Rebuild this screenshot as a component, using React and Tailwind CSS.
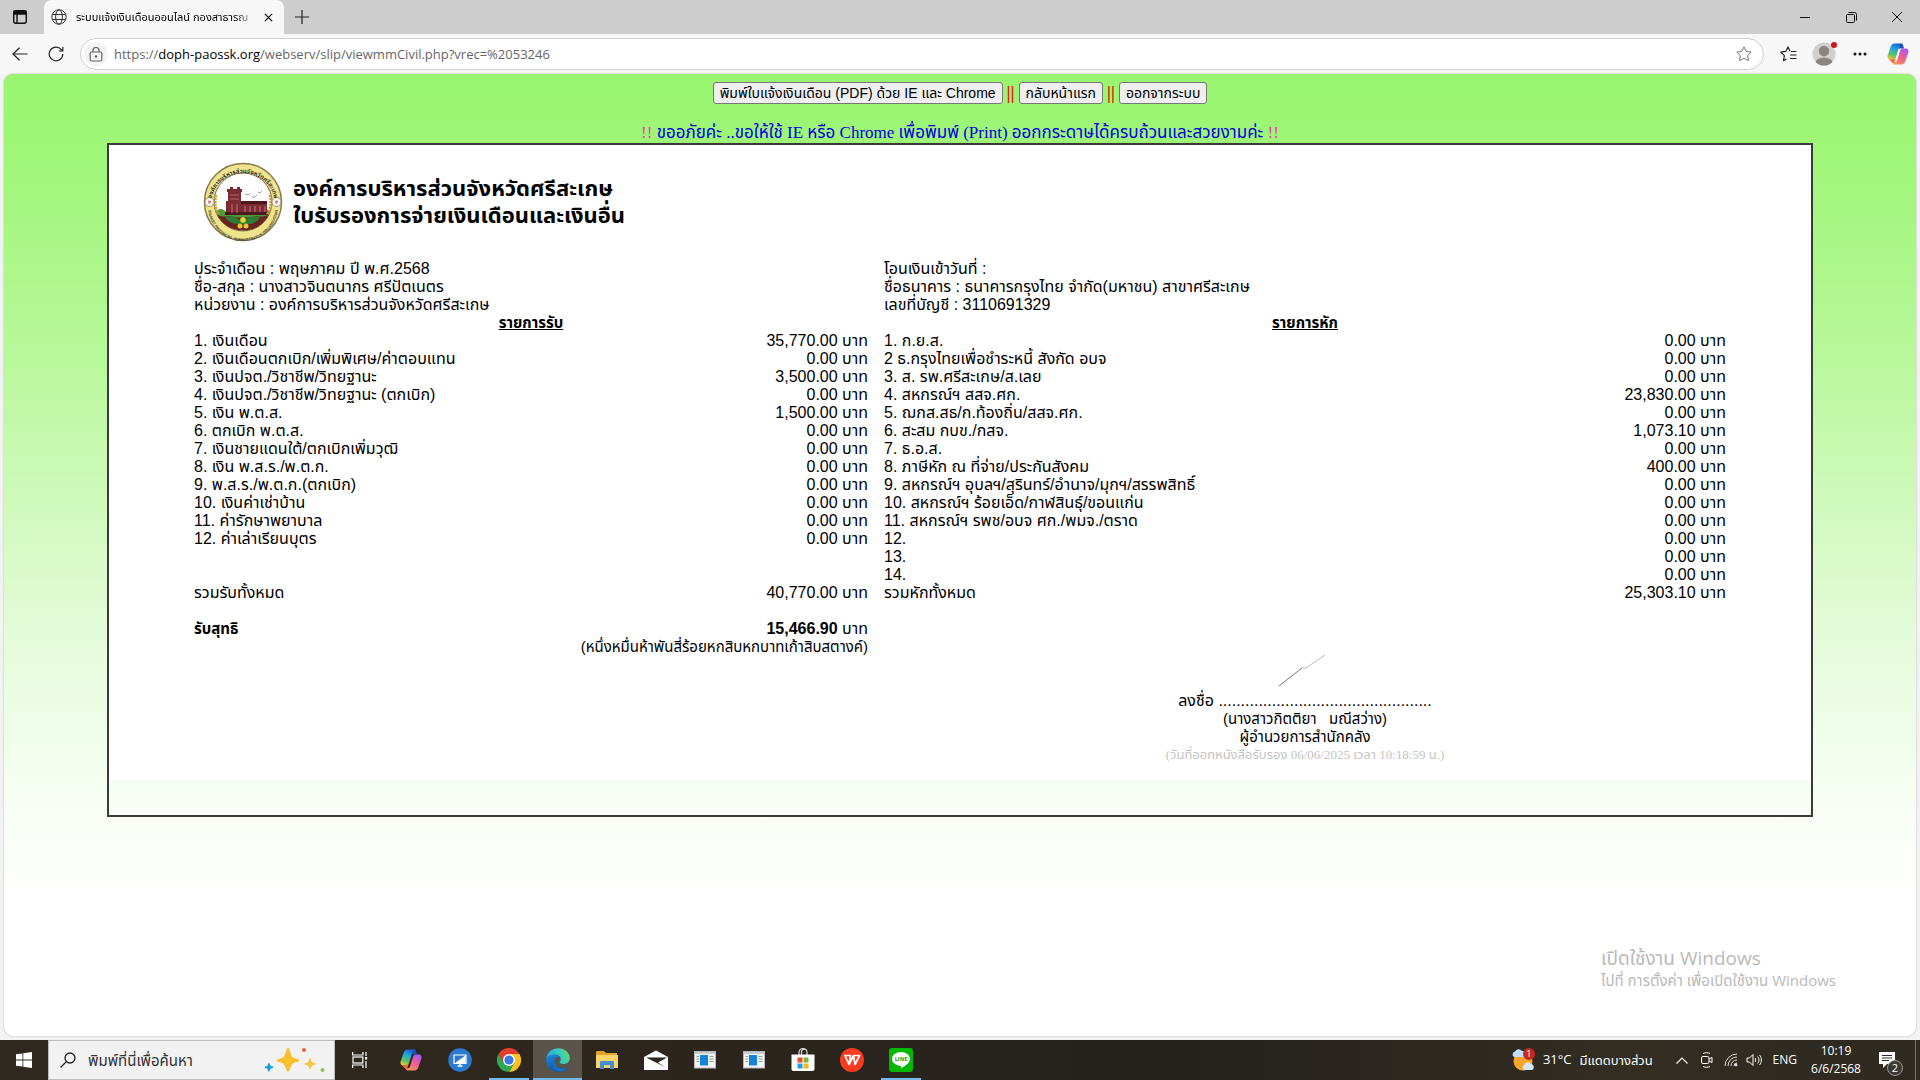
import React from "react";

const SANS = "font-['Liberation_Sans','Noto_Sans_Thai','Loma',sans-serif]";
const SERIF = "font-['Liberation_Serif','Noto_Sans_Thai','Loma',sans-serif]";
const UI = "font-['Open_Sans','Noto_Sans_Thai','Loma',sans-serif]";

const income = [
  ["1. เงินเดือน", "35,770.00"],
  ["2. เงินเดือนตกเบิก/เพิ่มพิเศษ/ค่าตอบแทน", "0.00"],
  ["3. เงินปจต./วิชาชีพ/วิทยฐานะ", "3,500.00"],
  ["4. เงินปจต./วิชาชีพ/วิทยฐานะ (ตกเบิก)", "0.00"],
  ["5. เงิน พ.ต.ส.", "1,500.00"],
  ["6. ตกเบิก พ.ต.ส.", "0.00"],
  ["7. เงินชายแดนใต้/ตกเบิกเพิ่มวุฒิ", "0.00"],
  ["8. เงิน พ.ส.ร./พ.ต.ก.", "0.00"],
  ["9. พ.ส.ร./พ.ต.ก.(ตกเบิก)", "0.00"],
  ["10. เงินค่าเช่าบ้าน", "0.00"],
  ["11. ค่ารักษาพยาบาล", "0.00"],
  ["12. ค่าเล่าเรียนบุตร", "0.00"],
  null,
  null,
  ["รวมรับทั้งหมด", "40,770.00"],
];

const deductions = [
  ["1. ก.ย.ส.", "0.00"],
  ["2 ธ.กรุงไทยเพื่อชำระหนี้ สังกัด อบจ", "0.00"],
  ["3. ส. รพ.ศรีสะเกษ/ส.เลย", "0.00"],
  ["4. สหกรณ์ฯ สสจ.ศก.", "23,830.00"],
  ["5. ฌกส.สธ/ก.ท้องถิ่น/สสจ.ศก.", "0.00"],
  ["6. สะสม กบข./กสจ.", "1,073.10"],
  ["7. ธ.อ.ส.", "0.00"],
  ["8. ภาษีหัก ณ ที่จ่าย/ประกันสังคม", "400.00"],
  ["9. สหกรณ์ฯ อุบลฯ/สุรินทร์/อำนาจ/มุกฯ/สรรพสิทธิ์", "0.00"],
  ["10. สหกรณ์ฯ ร้อยเอ็ด/กาฬสินธุ์/ขอนแก่น", "0.00"],
  ["11. สหกรณ์ฯ รพช/อบจ ศก./พมจ./ตราด", "0.00"],
  ["12.", "0.00"],
  ["13.", "0.00"],
  ["14.", "0.00"],
  ["รวมหักทั้งหมด", "25,303.10"],
];

function Copilot({ id, className }) {
  return (
    <svg viewBox="0 0 24 24" className={className} aria-hidden="true">
      <defs>
        <linearGradient id={id + "a"} x1="0.6" y1="0" x2="0.2" y2="1">
          <stop offset="0" stopColor="#1b5fd6" />
          <stop offset="0.35" stopColor="#1fa7e0" />
          <stop offset="0.7" stopColor="#5cc26b" />
          <stop offset="1" stopColor="#f3c92a" />
        </linearGradient>
        <linearGradient id={id + "b"} x1="0.7" y1="0" x2="0.2" y2="1">
          <stop offset="0" stopColor="#a55bf0" />
          <stop offset="0.45" stopColor="#ec5c98" />
          <stop offset="1" stopColor="#fb9350" />
        </linearGradient>
      </defs>
      <path d="M15 1.5H8.5c-2 0-3.200 1.500-3.900 3.500L1.800 13c-1 3 .4 4.500 2.700 4.500h2.200c2 0 2.900-1.100 3.500-3l2.600-8.500c.5-1.600 1.200-2.200 2.700-2.200h1.700C16.700 2.300 16.200 1.500 15 1.500z" fill={"url(#" + id + "a)"} />
      <path d="M14.500 1.500c1.500 0 2.200.8 2.700 2.300l.8 2.700h-3.500c-1 0-1.600.4-2 1.500l.8-3c.4-2 .2-3.500 1.200-3.500z" fill="#1f4fb8" />
      <path d="M9 22.500h6.500c2 0 3.200-1.500 3.900-3.500l2.800-8c1-3-.4-4.500-2.700-4.500h-2.200c-2 0-2.900 1.100-3.500 3L11.200 18c-.5 1.600-1.200 2.200-2.700 2.200H6.800c.5 1.500 1 2.300 2.200 2.300z" fill={"url(#" + id + "b)"} />
      <path d="M2.800 17.300h3.900c1.500 0 2.400-.5 3-1.600l-1 3.300c-.4 1.500-1.300 3-2.500 1.500z" fill="#f26a3b" />
    </svg>
  );
}

function WinButton({ label, children }) {
  return (
    <button aria-label={label} className="flex h-[34px] w-[46px] items-center justify-center">
      {children}
    </button>
  );
}

function TabStrip() {
  return (
    <div className="flex h-[34px] items-stretch bg-[#cdcdcd]">
      <button aria-label="Tab actions" className="flex w-11 items-center pl-3">
        <svg viewBox="0 0 16 16" className="size-4" fill="none" stroke="#111" strokeWidth="1.4">
          <rect x="1.700" y="1.700" width="12.600" height="12.600" rx="2.200" />
          <path d="M1.700 3.700c0-1.200.8-2 2-2h8.600c1.200 0 2 .8 2 2V5H1.700z" fill="#111" />
          <path d="M5 5v9" />
        </svg>
      </button>
      <div className="flex w-60 items-center rounded-t-lg bg-[#f7f7f7] pl-[7px]">
        <svg viewBox="0 0 16 16" className="size-4 shrink-0" fill="none" stroke="#333" strokeWidth="1">
          <circle cx="8" cy="8" r="7.200" />
          <ellipse cx="8" cy="8" rx="3.400" ry="7.200" />
          <path d="M1.500 5.500h13M1.500 10.500h13" />
        </svg>
        <span className="ml-[9px] w-[180px] text-[11px] leading-6 whitespace-nowrap text-black [mask-image:linear-gradient(to_right,black_88%,transparent)]">
          ระบบแจ้งเงินเดือนออนไลน์ กองสาธารณ
        </span>
        <button aria-label="Close tab" className="ml-1 flex size-4 items-center justify-center">
          <svg viewBox="0 0 10 10" className="size-[9px]" stroke="#111" strokeWidth="1.400"><path d="M1 1l8 8M9 1l-8 8" /></svg>
        </button>
      </div>
      <button aria-label="New tab" className="flex w-9 items-center justify-center">
        <svg viewBox="0 0 14 14" className="size-3.5" stroke="#222" strokeWidth="1.200"><path d="M7 0v14M0 7h14" /></svg>
      </button>
      <div className="ml-auto flex">
        <WinButton label="Minimize">
          <svg viewBox="0 0 10 10" className="size-2.5" stroke="#111"><path d="M0 5.500h10" /></svg>
        </WinButton>
        <WinButton label="Restore">
          <svg viewBox="0 0 11 11" className="size-[11px]" fill="none" stroke="#111"><rect x=".5" y="2.500" width="8" height="8" rx="1" /><path d="M2.500.5h6a2 2 0 0 1 2 2v6" /></svg>
        </WinButton>
        <WinButton label="Close">
          <svg viewBox="0 0 10 10" className="size-2.5" stroke="#111"><path d="M0 0l10 10M10 0L0 10" /></svg>
        </WinButton>
      </div>
    </div>
  );
}

function Toolbar() {
  return (
    <div className="flex h-10 items-center bg-[#f7f7f7]">
      <button aria-label="Back" className="flex w-10 justify-center">
        <svg viewBox="0 0 16 14" className="h-3.5 w-4" fill="none" stroke="#222" strokeWidth="1.200"><path d="M15.500 7H1M7.500.8L1 7l6.500 6.200" /></svg>
      </button>
      <button aria-label="Reload" className="flex w-8 justify-center">
        <svg viewBox="0 0 16 16" className="size-4" fill="none" stroke="#222" strokeWidth="1.200"><path d="M14.800 8a6.800 6.800 0 1 1-1.500-4.300L14.800 5M14.800 1v4h-4" /></svg>
      </button>
      <div className="ml-2 flex h-8 flex-1 items-center rounded-full border border-[#cfcfcf] bg-white pr-[11px] pl-[3px]">
        <span className="flex size-6 items-center justify-center rounded-full bg-[#f3f3f3]">
          <svg viewBox="0 0 14 15" className="h-[15px] w-3.5" fill="none" stroke="#666" strokeWidth="1.200">
            <rect x="1.200" y="5" width="11.600" height="9" rx="1.500" />
            <path d="M4 5V3.500a3 3 0 0 1 6 0V5" />
            <circle cx="7" cy="9.500" r=".7" fill="#666" />
          </svg>
        </span>
        <a href="https://doph-paossk.org/webserv/slip/viewmmCivil.php?vrec=%2053246" className="ml-1.5 flex-1 text-[13px] leading-5 text-[#666]">
          https://<span className="text-black">doph-paossk.org</span>/webserv/slip/viewmmCivil.php?vrec=%2053246
        </a>
        <button aria-label="Add to favorites">
          <svg viewBox="0 0 16 16" className="size-4" fill="none" stroke="#777" strokeLinejoin="round"><path d="M8 .8l2.200 4.600 5 .7-3.600 3.500.9 5L8 12.200l-4.500 2.400.9-5L.8 6.100l5-.7z" /></svg>
        </button>
      </div>
      <button aria-label="Favorites" className="ml-4 flex w-4 justify-center">
        <svg viewBox="0 0 17 16" className="h-4 w-[17px] shrink-0" fill="none" stroke="#222" strokeWidth="1.200" strokeLinejoin="round"><path d="M10 5.300L8 .9 5.800 5.400l-5 .7L4.400 9.600l-.9 5L6.500 13M11 5.500h5.500M10 9h6.500M10 12.500h6.500" /></svg>
      </button>
      <button aria-label="Profile" className="relative ml-4 flex">
        <svg viewBox="0 0 24 24" className="size-6">
          <defs><clipPath id="avatar"><circle cx="12" cy="12" r="11.500" /></clipPath></defs>
          <g clipPath="url(#avatar)"><rect width="24" height="24" fill="#d2d0ce" /><circle cx="12" cy="9" r="5.200" fill="#8a8683" /><ellipse cx="12" cy="21" rx="8.500" ry="5.500" fill="#8a8683" /></g>
        </svg>
        <span className="absolute top-0 -right-px size-1.5 rounded-full bg-[#d8101c]" />
      </button>
      <button aria-label="Settings and more" className="ml-1 flex w-10 justify-center">
        <svg viewBox="0 0 14 4" className="h-1 w-3.5" fill="#111"><circle cx="2" cy="2" r="1.500" /><circle cx="7" cy="2" r="1.500" /><circle cx="12" cy="2" r="1.500" /></svg>
      </button>
      <button aria-label="Copilot" className="mr-2.5 ml-1.5 flex"><Copilot id="ct" className="size-6" /></button>
    </div>
  );
}

function Seal() {
  return (
    <svg viewBox="0 0 80 80" className="size-20 shrink-0" role="img" aria-label="seal">
      <defs>
        <path id="sealTop" d="M8 43a32 32 0 1 1 64 0" />
        <path id="sealBottom" d="M5 44a35 35 0 0 0 70 0" />
      </defs>
      <circle cx="40" cy="40" r="38.500" fill="#f0e48a" stroke="#8a7a50" strokeWidth="1.500" />
      <circle cx="40" cy="40" r="29" fill="#fff" stroke="#7a6a40" />
      <path d="M14 52c7 3 45 3 52 0-4 10-14 16.500-26 16.500S18 62 14 52z" fill="#6b2320" />
      <path d="M13 50c3-5 8-3 11 1h32c3-4 8-6 11-1-2 5-9 5-14 4-9 2-18 2-27 0-5 1-11 1-13-4z" fill="#4f9a3a" />
      <path d="M22 55c6-2 12 0 17 5 5-5 11-7 18-5-3 6-9 8-17 7-9 1-15-2-18-7z" fill="#2f7d32" />
      <path d="M24 27h3v-2h3v2h4v-2h3v2h2v3h-1v9h26v13H23V39h2v-9h-1z" fill="#7e2a33" />
      <path d="M38 39h26v3H38zM22 50h43v3H22z" fill="#4c161d" />
      <path d="M27 33h9M27 37h9M42 44v6M47 44v6M52 44v6M57 44v6M62 44v6M29 42v9M34 42v9" stroke="#b56a6c" strokeWidth="1.200" />
      <path d="M42 32l3 1 2-2M49 35l3 0 2-2M55 30l2 1 2-2" stroke="#8a6f78" strokeWidth=".7" fill="none" />
      <path d="M13 33c-2 8-1 14 3 20M67 33c2 8 1 14-3 20" stroke="#c79b32" strokeWidth="3" strokeDasharray="2 1" fill="none" />
      <circle cx="40" cy="58" r="2.800" fill="#e8d93a" /><circle cx="37" cy="64" r="2.500" fill="#e5c92c" /><circle cx="43" cy="64" r="2.500" fill="#e5c92c" />
      <circle cx="6.500" cy="40" r="4.500" fill="#fff" stroke="#7a6a40" strokeWidth=".7" /><circle cx="73.500" cy="40" r="4.500" fill="#fff" stroke="#7a6a40" strokeWidth=".7" />
      <circle cx="6.500" cy="40" r="1.800" fill="#d98a84" /><circle cx="73.500" cy="40" r="1.800" fill="#d98a84" />
      <text fontSize="6" fontWeight="700" fill="#333"><textPath href="#sealTop" startOffset="50%" textAnchor="middle">องค์การบริหารส่วนจังหวัดศรีสะเกษ</textPath></text>
      <text fontSize="3.700" fontWeight="700" fill="#333"><textPath href="#sealBottom" startOffset="50%" textAnchor="middle">SISAKET PROVINCIAL ADMINISTRATIVE ORGANIZATION</textPath></text>
    </svg>
  );
}

function SlipTable({ info, title, rows, children }) {
  return (
    <div className="min-w-0">
      {info.map((line) => <p key={line} className="whitespace-nowrap">{line}</p>)}
      <table className="w-full border-collapse">
        <thead>
          <tr><th colSpan={2} className="h-[18px] p-0 text-center text-[15px] font-bold underline">{title}</th></tr>
        </thead>
        <tbody>
          {rows.map((row, i) => (
            <tr key={i} className="h-[18px]">
              <td className="p-0 whitespace-nowrap">{row ? row[0] : ""}</td>
              <td className="p-0 text-right whitespace-nowrap">{row ? row[1] + " บาท" : ""}</td>
            </tr>
          ))}
          {children}
        </tbody>
      </table>
    </div>
  );
}

function Slip() {
  return (
    <main className={"mx-[103px] border-2 border-[#3a3a3a] pb-[35px] text-[16px] leading-[18px] text-black " + SANS}>
      <div className="bg-white px-[85px] pt-[17px] pb-4">
        <header className="flex items-center gap-2.5 pl-[9px]">
          <Seal />
          <h1 className="text-[22px] leading-[27px] font-bold">
            องค์การบริหารส่วนจังหวัดศรีสะเกษ<br />ใบรับรองการจ่ายเงินเดือนและเงินอื่น
          </h1>
        </header>
        <div className="mt-[18px] grid grid-cols-[674fr_842fr] gap-4">
          <SlipTable
            title="รายการรับ"
            rows={income}
            info={["ประจำเดือน : พฤษภาคม ปี พ.ศ.2568", "ชื่อ-สกุล : นางสาวจินตนากร ศรีปัตเนตร", "หน่วยงาน : องค์การบริหารส่วนจังหวัดศรีสะเกษ"]}
          >
            <tr className="h-[18px]"><td colSpan={2} /></tr>
            <tr className="h-[18px]">
              <td className="p-0 text-[15px] font-bold">รับสุทธิ</td>
              <td className="p-0 text-right"><b>15,466.90</b> บาท</td>
            </tr>
            <tr className="h-[18px]"><td colSpan={2} className="p-0 text-right text-[15px]">(หนึ่งหมื่นห้าพันสี่ร้อยหกสิบหกบาทเก้าสิบสตางค์)</td></tr>
          </SlipTable>
          <div>
            <SlipTable
              title="รายการหัก"
              rows={deductions}
              info={["โอนเงินเข้าวันที่ :", "ชื่อธนาคาร : ธนาคารกรุงไทย จำกัด(มหาชน) สาขาศรีสะเกษ", "เลขที่บัญชี : 3110691329"]}
            />
            <div className="mt-[51px] text-center">
              <svg viewBox="0 0 48 34" className="ml-[394px] h-[34px] w-12" fill="none"><path d="M1 33l23-18" stroke="#777" /><path d="M24 15l4 0L47 2" stroke="#aaa" strokeWidth=".8" /></svg>
              <p className="mt-[5px]">ลงชื่อ ................................................</p>
              <p className="text-[15px] whitespace-pre">(นางสาวกิตติยา   มณีสว่าง)</p>
              <p className="text-[15px]">ผู้อำนวยการสำนักคลัง</p>
              <p className={"text-[13px] text-[#c4c4c4] " + SERIF}>(วันที่ออกหนังสือรับรอง 06/06/2025 เวลา 10:18:59 น.)</p>
            </div>
          </div>
        </div>
      </div>
    </main>
  );
}

function PageButton({ children }) {
  return <button className={"h-[22px] rounded-[3px] border border-[#767676] bg-[#efefef] px-1.5 text-[14px] leading-5 font-normal whitespace-nowrap text-black " + SANS}>{children}</button>;
}

function WebPage() {
  return (
    <div className="relative mx-1 flex-1 overflow-hidden rounded-[9px] bg-white bg-[linear-gradient(to_bottom,#99f56f_0px,#9ff678_76px,#b3f793_246px,#e2fbd6_546px,#f8fef5_726px,#ffffff_830px)] pt-2 shadow-[0_0_2px_#aaa]">
      <div className={"flex h-[22px] items-center justify-center gap-1 text-[18px] font-bold text-[#ff0000] " + SERIF}>
        <PageButton>พิมพ์ใบแจ้งเงินเดือน (PDF) ด้วย IE และ Chrome</PageButton>
        <span>||</span>
        <PageButton>กลับหน้าแรก</PageButton>
        <span>||</span>
        <PageButton>ออกจากระบบ</PageButton>
      </div>
      <p className={"mt-[18px] h-[21px] text-center text-[17px] leading-[21px] text-[#0000e0] " + SERIF}>
        <span className="text-[#e83fc0]">!!</span> ขออภัยค่ะ ..ขอให้ใช้ IE หรือ Chrome เพื่อพิมพ์ (Print) ออกกระดาษได้ครบถ้วนและสวยงามค่ะ <span className="text-[#e83fc0]">!!</span>
      </p>
      <Slip />
      <div className="absolute right-20 bottom-[46px] text-[#b9b9b9]">
        <p className="text-[19px] leading-6">เปิดใช้งาน Windows</p>
        <p className="text-[15px] leading-5">ไปที่ การตั้งค่า เพื่อเปิดใช้งาน Windows</p>
      </div>
    </div>
  );
}

function TaskButton({ label, children, open, active }) {
  return (
    <button aria-label={label} className={"relative flex h-10 w-[49px] items-center justify-center " + (active ? "bg-[#5a534b]" : "")}>
      {children}
      {(open || active) && <span className={"absolute bottom-0 h-0.5 bg-[#76b9ed] " + (active ? "w-full" : "w-10")} />}
    </button>
  );
}

function AppWindowIcon() {
  return (
    <svg viewBox="0 0 22 18" className="h-[18px] w-[22px]"><rect x=".5" y=".5" width="21" height="16.500" fill="#f4f4f4" stroke="#b8b8b8" /><path d="M1 1h20v2H1z" fill="#c5ccd2" /><rect x="6" y="4" width="8" height="10.500" fill="#1583d8" /><path d="M2.500 5.500h2.500M2.500 8h2.500M2.500 10.500h2.500M15.500 5.500h4M15.500 8h4M15.500 10.500h4" stroke="#999" /></svg>
  );
}

function Taskbar() {
  return (
    <footer className="flex h-10 items-center bg-[linear-gradient(to_right,#2f291f,#2b251d_40%,#24211d_60%,#332d22_85%,#2e2a22)] text-white">
      <button aria-label="Start" className="flex h-10 w-12 items-center justify-center">
        <svg viewBox="0 0 16 16" className="size-4" fill="#fff"><path d="M0 2.300l6.500-.9v6.200H0zM7.300 1.300L16 0v7.600H7.300zM0 8.400h6.500v6.200L0 13.700zM7.300 8.400H16V16l-8.700-1.300z" /></svg>
      </button>
      <label className="flex h-10 w-[287px] items-center border border-[#bdbdbd] bg-[#f2f2f2] pl-[11px]">
        <svg viewBox="0 0 16 16" className="size-4 shrink-0" fill="none" stroke="#222" strokeWidth="1.300"><circle cx="10" cy="6" r="5" /><path d="M6.500 9.500L.5 15.500" /></svg>
        <input aria-label="พิมพ์ที่นี่เพื่อค้นหา" placeholder="พิมพ์ที่นี่เพื่อค้นหา" className="ml-3 w-40 min-w-0 bg-transparent text-[15px] leading-6 outline-none placeholder:text-[#333]" />
        <svg viewBox="0 0 62 26" className="ml-4 h-[26px] w-[62px] shrink-0">
          <path d="M24 1c2 0 2.500 8 5 9.500 2 1.200 6.500 1.500 6.500 3s-4.500 1.500-6.500 3C26.500 18 26 24.500 24 24.500S21.500 18 19 16.500c-2-1.500-6.500-1.500-6.500-3s4.500-1.800 6.500-3C21.500 9 22 1 24 1z" fill="#fbbf2c" />
          <path d="M46 11c1 0 1.200 3.500 2.200 4.300.8.700 3.300.7 3.300 1.700s-2.500.8-3.300 1.700C47.200 19.500 47 22 46 22s-1.200-2.500-2.200-3.300c-.8-.8-3.300-.7-3.300-1.700s2.500-1 3.300-1.700C44.800 14.500 45 11 46 11z" fill="#f9c64a" />
          <path d="M5 16c.8 0 1 2.300 1.700 2.800.7.500 2.800.4 2.800 1.400s-2.100.8-2.800 1.500S5.500 25 4.700 24.700s-.7-2-1.200-2.700-2.800-.9-2.800-1.700 2-1 2.600-1.600S4.200 16 5 16z" fill="#1b9de2" />
          <circle cx="40" cy="3" r="2" fill="#e8632b" /><circle cx="58.500" cy="23" r="2" fill="#8cc34b" />
        </svg>
      </label>
      <TaskButton label="Task view">
        <svg viewBox="0 0 16 16" className="size-4" fill="none" stroke="#fff" strokeWidth="1.200"><path d="M.6 0v3h10.300V0M.6 16v-3h10.300v3" /><rect x="1" y="5" width="9.800" height="6" /><path d="M14 0v4M14 9v7" /><path d="M13 5h2.200v2.500H13z" fill="#fff" stroke="none" /></svg>
      </TaskButton>
      <div className="ml-0.5 flex">
        <TaskButton label="Copilot"><Copilot id="cb" className="size-6" /></TaskButton>
        <TaskButton label="PC Manager">
          <svg viewBox="0 0 24 24" className="size-6"><circle cx="12" cy="12" r="11.800" fill="#2a7bd0" /><path d="M6 7h12v8.500H6z" fill="none" stroke="#fff" strokeWidth="1.200" /><path d="M17.500 7.500v7.500H7z" fill="#fff" /><path d="M9.500 18h5M12 15.500V18" stroke="#fff" strokeWidth="1.500" /></svg>
        </TaskButton>
        <TaskButton label="Chrome" open>
          <svg viewBox="0 0 24 24" className="size-6"><path d="M12 12V6h10.400A12 12 0 0 1 12 24l5.200-9z" fill="#fcc31e" /><path d="M12 12l-5.200 3L1.600 6A12 12 0 0 0 12 24l5.200-9z" fill="#2da94f" /><path d="M12 6h10.400a12 12 0 0 0-20.800 0l5.200 9z" fill="#e33b2e" /><circle cx="12" cy="12" r="6" fill="#fff" /><circle cx="12" cy="12" r="4.600" fill="#3b78e7" /></svg>
        </TaskButton>
        <TaskButton label="Edge" active>
          <svg viewBox="0 0 24 24" className="size-6">
            <defs>
              <linearGradient id="edgeTop" x1="0" y1=".6" x2="1" y2=".3"><stop offset="0" stopColor="#2aa5e2" /><stop offset=".5" stopColor="#2fc7cf" /><stop offset="1" stopColor="#5fdc6c" /></linearGradient>
              <linearGradient id="edgeLow" x1="0" y1="0" x2=".6" y2="1"><stop offset="0" stopColor="#1b8fdc" /><stop offset="1" stopColor="#0c4f9e" /></linearGradient>
            </defs>
            <path d="M.3 11C1 4.500 6 .2 12 .2c6.800 0 11.800 4.800 11.800 9.800 0 3.700-2.800 6-6 6-3 0-4.300-1-4-2 .3-.7 1-1.200 1-2.700 0-2.500-2.300-4.600-5.800-4.600C4.800 6.700 1 8.500.3 11z" fill="url(#edgeTop)" />
            <path d="M.2 12C.2 8.500 4 6.700 8.500 6.700c3 0 5 1.200 5.900 2.700-3.700-1.500-6 1-6 3.600 0 4.500 4 8.500 9.500 7.500 1.500-.3 3-.8 3.700-.7.500.1-2.600 4-9.300 4A12 12 0 0 1 .2 12z" fill="url(#edgeLow)" />
            <path d="M8.400 13c0 4.500 4 8.500 9.500 7.500 1.700-.3 3.200-1 3.700-.7-1.800 2.400-4.600 3.700-7.600 4C9 23 6.500 19.500 6.500 16c0-3.500 2-6.500 4.800-7C9.500 9.800 8.400 11.300 8.400 13z" fill="#176fc4" />
          </svg>
        </TaskButton>
        <TaskButton label="File Explorer">
          <svg viewBox="0 0 22 20" className="h-5 w-[22px]"><path d="M0 2.500C0 1.500.6 1 1.500 1H8l2 2h11v5H0z" fill="#e0a52c" /><path d="M0 5h21c.6 0 1 .4 1 1v12H0z" fill="#fbd56a" /><path d="M4 19v-6.500C4 11.500 4.500 11 5.500 11h11c1 0 1.500.5 1.500 1.500V19h-4v-4H8v4z" fill="#3f8fd1" /></svg>
        </TaskButton>
        <TaskButton label="Mail">
          <svg viewBox="0 0 24 20" className="h-5 w-6"><path d="M0 7L12 .5 24 7v13H0z" fill="#fff" /><path d="M2 7.500h21l-9 5 7 4.500z" fill="#2b251d" /></svg>
        </TaskButton>
        <TaskButton label="App window"><AppWindowIcon /></TaskButton>
        <TaskButton label="App window"><AppWindowIcon /></TaskButton>
        <TaskButton label="Microsoft Store">
          <svg viewBox="0 0 24 24" className="size-6"><path d="M8 7V4.500a4 4 0 0 1 8 0V7M10.500 7V4.500a3 3 0 0 1 5-2.500" fill="none" stroke="#ddd" strokeWidth="1.200" /><path d="M.5 6.500h23V21c0 1.300-.8 2-2 2h-19c-1.200 0-2-.7-2-2z" fill="#fff" /><path d="M6.500 9.500h5v5h-5z" fill="#e8502a" /><path d="M12.500 9.500h5v5h-5z" fill="#7cb82b" /><path d="M6.500 15.500h5v5h-5z" fill="#1ba1e2" /><path d="M12.500 15.500h5v5h-5z" fill="#fbb416" /></svg>
        </TaskButton>
        <TaskButton label="WPS Office">
          <svg viewBox="0 0 24 24" className="size-6"><circle cx="12" cy="12" r="12" fill="#fb3a1e" /><path d="M5 7.500h5.500l-1.500 9L5 7.500zM9 16.500l4.500-9 1.500 9 4.500-9h-6" fill="none" stroke="#fff" strokeWidth="1.700" strokeLinejoin="round" /></svg>
        </TaskButton>
        <TaskButton label="LINE" open>
          <svg viewBox="0 0 24 24" className="size-6"><rect width="24" height="24" rx="3" fill="#00b900" /><path d="M12 4c5 0 9 3 9 7 0 3.500-4 6.500-9 9.500.5-2 0-2.700-1-2.800C6.500 17.300 3 14.500 3 11c0-4 4-7 9-7z" fill="#fff" /><text x="12" y="13" fontSize="5.500" fontWeight="700" textAnchor="middle" fill="#00a000">LINE</text></svg>
        </TaskButton>
      </div>
      <div className="ml-auto flex items-center text-[12px]">
        <span className="relative flex">
          <svg viewBox="0 0 24 22" className="h-[22px] w-6"><circle cx="12" cy="12" r="9.500" fill="#f9a72b" /><path d="M3 8a3 3 0 0 1 1-5.500A4 4 0 0 1 11 2a3 3 0 0 1 1 6z" fill="#c4dcf7" /><path d="M13 21a3 3 0 0 1 0-5 4 4 0 0 1 7-1c3 0 4 5 1 6z" fill="#d4e6fa" /></svg>
          <span className="absolute -top-px right-0 flex size-3 items-center justify-center rounded-full bg-[#c42b1c] text-[9px] leading-3">1</span>
        </span>
        <span className="ml-2 text-[13px]">31°C</span>
        <span className="ml-2 w-[76px] text-[13px] leading-6 whitespace-nowrap">มีแดดบางส่วน</span>
        <svg viewBox="0 0 12 7" className="ml-5 h-[7px] w-3" fill="none" stroke="#fff" strokeWidth="1.200"><path d="M.5 6.500L6 1l5.500 5.500" /></svg>
        <svg viewBox="0 0 14 16" className="ml-3 h-4 w-3.5" fill="none" stroke="#fff"><rect x="1.500" y="4.500" width="7.500" height="7" rx="1.500" /><path d="M9 7l3-1.500v5L9 9M3 1.500c2-1 5-1 7 0M3 14.500c2 1 5 1 7 0" /></svg>
        <svg viewBox="0 0 14 14" className="ml-2.5 size-3.5" fill="none" stroke="#ddd"><path d="M1 13A12 12 0 0 1 13 1M4 13a9 9 0 0 1 9-9M7 13a6 6 0 0 1 6-6M10 13a3 3 0 0 1 3-3" /><circle cx="12" cy="12" r="1" fill="#fff" /></svg>
        <svg viewBox="0 0 17 14" className="ml-2 h-3.5 w-[17px]" fill="none" stroke="#fff"><path d="M1 5h2.500L7 1.500v11L3.500 9H1zM9 5c1 1 1 3 0 4M11.500 3.500c2 2 2 5 0 7M13.500 2c2.500 3 2.500 7 0 10" /></svg>
        <span className="ml-2.5 text-[12px]">ENG</span>
        <span className="ml-3 w-[54px] text-center leading-[18px]">10:19<br />6/6/2568</span>
        <span className="relative ml-4 flex w-7">
          <svg viewBox="0 0 16 16" className="size-4"><path d="M0 0h16v12H8l-4 4v-4H0z" fill="#fff" /><path d="M3 3.500h10M3 6h10M3 8.500h7" stroke="#2e2a22" /></svg>
          <span className="absolute -bottom-2 left-2 flex size-4 items-center justify-center rounded-full border border-[#999] bg-[#3c3832] text-[11px] leading-4">2</span>
        </span>
        <span className="ml-2 h-10 w-[5px] border-l border-[#777]" />
      </div>
    </footer>
  );
}

export default function App() {
  return (
    <div className={"flex min-h-screen flex-col bg-[#f3f3f3] " + UI}>
      <TabStrip />
      <Toolbar />
      <WebPage />
      <div className="h-1" />
      <Taskbar />
    </div>
  );
}
